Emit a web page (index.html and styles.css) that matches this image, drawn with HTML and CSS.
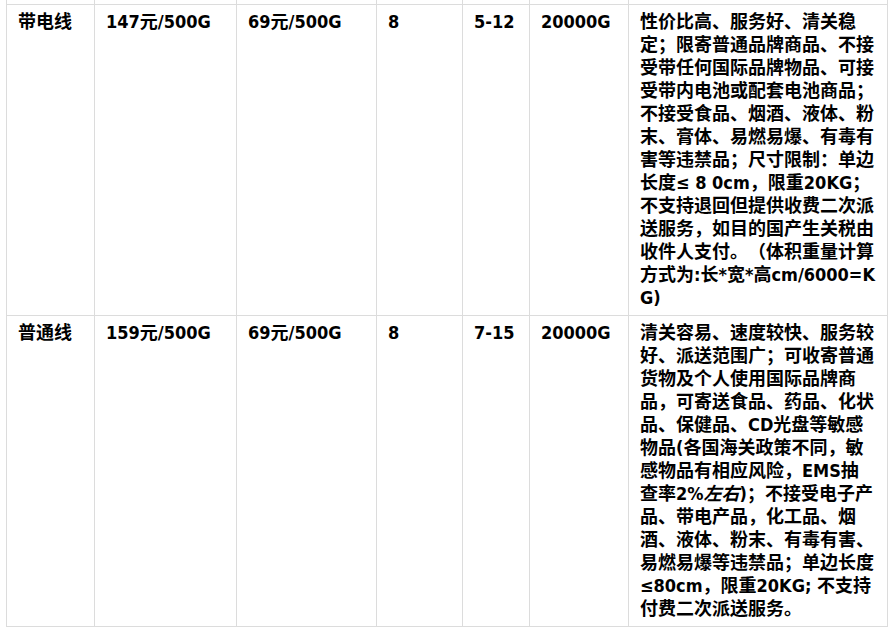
FILE: index.html
```html
<!DOCTYPE html>
<html lang="zh-CN">
<head>
<meta charset="utf-8">
<title>线路价格</title>
<link rel="stylesheet" href="styles.css">
</head>
<body>
<table class="rates">
  <colgroup>
    <col class="c-name">
    <col class="c-first">
    <col class="c-extra">
    <col class="c-fuel">
    <col class="c-days">
    <col class="c-limit">
    <col class="c-desc">
  </colgroup>
  <tbody>
    <tr class="cut-row">
      <td></td><td></td><td></td><td></td><td></td><td></td><td></td>
    </tr>
    <tr class="first-row">
      <td>带电线</td>
      <td>147元/500G</td>
      <td>69元/500G</td>
      <td>8</td>
      <td>5-12</td>
      <td>20000G</td>
      <td class="desc">性价比高、服务好、清关稳定；限寄普通品牌商品、不接受带任何国际品牌物品、可接受带内电池或配套电池商品；不接受食品、烟酒、液体、粉末、膏体、易燃易爆、有毒有害等违禁品；尺寸限制：单边长度≤ 8 0cm，限重20KG；不支持退回但提供收费二次派送服务，如目的国产生关税由收件人支付。（体积重量计算方式为:长*宽*高cm/6000=KG)</td>
    </tr>
    <tr>
      <td>普通线</td>
      <td>159元/500G</td>
      <td>69元/500G</td>
      <td>8</td>
      <td>7-15</td>
      <td>20000G</td>
      <td class="desc">清关容易、速度较快、服务较好、派送范围广；可收寄普通货物及个人使用国际品牌商品，可寄送食品、药品、化状品、保健品、CD光盘等敏感物品(各国海关政策不同，敏感物品有相应风险，EMS抽查率2%<em>左右</em>)；不接受电子产品、带电产品，化工品、烟酒、液体、粉末、有毒有害、易燃易爆等违禁品；单边长度≤80cm，限重20KG; 不支持付费二次派送服务。</td>
    </tr>
  </tbody>
</table>
</body>
</html>
```
FILE: styles.css
```css
html, body {
  margin: 0;
  padding: 0;
  background: #ffffff;
}

body {
  font-family: "DejaVu Sans Condensed", "Noto Sans CJK SC", sans-serif;
  font-size: 18px;
  font-weight: 700;
  color: #000000;
}

.rates {
  margin-left: 6px;
  border-collapse: collapse;
  table-layout: fixed;
  width: 881px;
}

.c-name { width: 88px; }
.c-first { width: 142px; }
.c-extra { width: 140px; }
.c-fuel { width: 86px; }
.c-days { width: 67px; }
.c-limit { width: 99px; }
.c-desc { width: 259px; }

.rates td {
  border: 1px solid #dcdcdc;
  padding: 5px 11px 6px 11px;
  vertical-align: top;
  line-height: 23px;
  word-break: break-all;
  text-spacing-trim: space-all;
}

.rates .cut-row td {
  border-top: none;
  padding: 0;
  height: 4px;
  line-height: 0;
}

.rates em {
  font-style: italic;
}
```
